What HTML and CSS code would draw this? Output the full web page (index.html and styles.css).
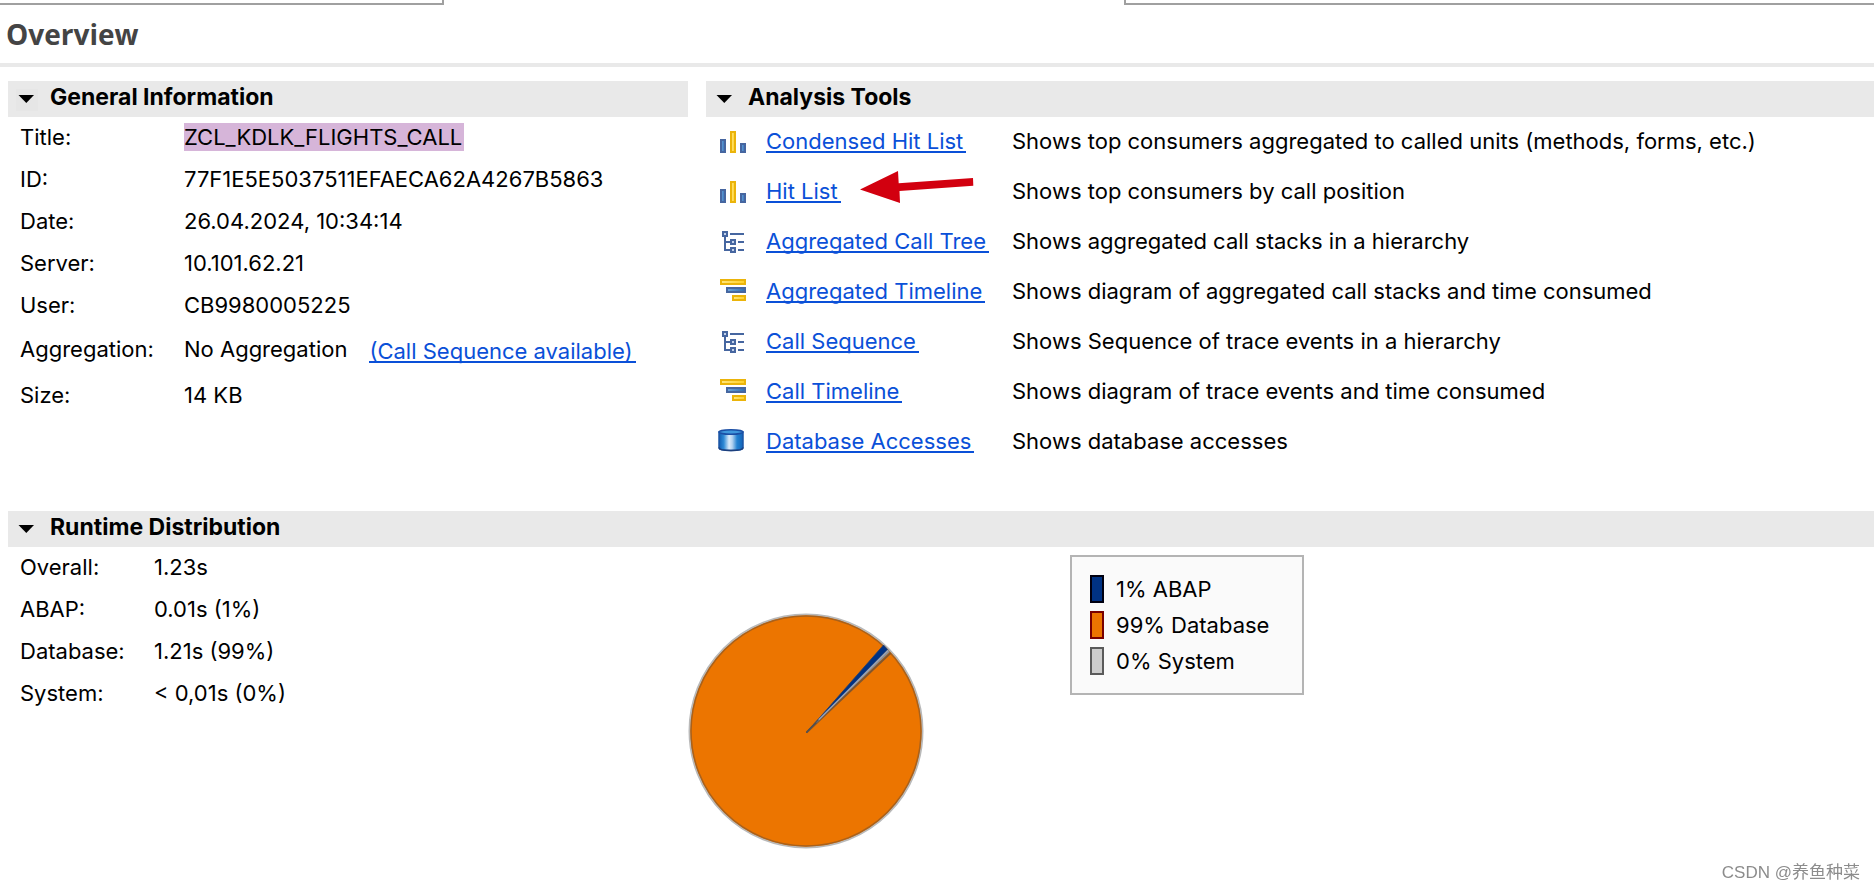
FILE: index.html
```html
<!DOCTYPE html>
<html lang="en">
<head>
<meta charset="utf-8">
<title>Overview</title>
<link rel="stylesheet" href="styles.css">
</head>
<body>
<svg class="defs" aria-hidden="true">
  <defs>
    <linearGradient id="blue" x1="0" y1="0" x2="1" y2="0"><stop offset="0" stop-color="#6fa6dc"/><stop offset="1" stop-color="#2f6db5"/></linearGradient>
    <linearGradient id="yellow" x1="0" y1="0" x2="1" y2="0"><stop offset="0" stop-color="#ffe680"/><stop offset="1" stop-color="#ffd028"/></linearGradient>
    <linearGradient id="drum" x1="0" y1="0" x2="1" y2="0"><stop offset="0" stop-color="#0f5bb0"/><stop offset=".2" stop-color="#2f8ad6"/><stop offset=".42" stop-color="#dcebfa"/><stop offset=".55" stop-color="#b4d3f0"/><stop offset=".75" stop-color="#2583d2"/><stop offset="1" stop-color="#1263b8"/></linearGradient>
    <symbol id="bars" viewBox="0 0 32 26">
      <g stroke-width="2"><path d="M5 12h4v12H5z" fill="url(#blue)" stroke="#4666a0"/><path d="M15 4h4v20h-4z" fill="url(#yellow)" stroke="#ebb40a"/><path d="M25 16h4v8h-4z" fill="url(#blue)" stroke="#4666a0"/></g>
    </symbol>
    <symbol id="tree" viewBox="0 0 32 26">
      <g fill="#c3d2ea" stroke="#4666a0" stroke-width="2"><path d="M14 6h14M9 9v13h6M9 14h6M22 14h6M22 22h6" fill="none"/><path d="M7 4h4v4H7zM15 12h4v4h-4zM15 20h4v4h-4z"/></g>
    </symbol>
    <symbol id="timeline" viewBox="0 0 32 26">
      <g stroke-width="2"><path d="M5 2h24v4H5z" fill="url(#yellow)" stroke="#ebb40a"/><path d="M11 10h18v4H11z" fill="url(#blue)" stroke="#4666a0"/><path d="M17 18h12v4H17z" fill="url(#yellow)" stroke="#ebb40a"/></g>
    </symbol>
    <symbol id="database" viewBox="0 0 32 26">
      <path d="M3 4v16c0 1.500 5 2.500 12 2.500s12-1 12-2.500V4z" fill="url(#drum)" stroke="#1c55a5" stroke-width="1.500"/>
      <path d="M3 19.500c0 2 5 3 12 3s12-1 12-3" fill="none" stroke="#1d3f7c" stroke-width="1.500"/>
      <ellipse cx="15" cy="4" rx="12" ry="2.300" fill="#3f97dc" stroke="#1c4fa5" stroke-width="1.600"/>
    </symbol>
  </defs>
</svg>

<div class="tabs"><div class="tab tab-left"></div><div></div><div class="tab tab-right"></div></div>
<header class="page-head"><h1>Overview</h1></header>

<main>
  <div class="columns">
    <section>
      <h2 class="bar"><button type="button" class="focused"><svg class="twisty" viewBox="0 0 22 22" aria-hidden="true"><path d="M2.500 6h15.500l-7.700 8z"/></svg>General Information</button></h2>
      <dl class="info">
        <div class="row"><dt>Title:</dt><dd><mark>ZCL_KDLK_FLIGHTS_CALL</mark></dd></div>
        <div class="row"><dt>ID:</dt><dd>77F1E5E5037511EFAECA62A4267B5863</dd></div>
        <div class="row"><dt>Date:</dt><dd>26.04.2024, 10:34:14</dd></div>
        <div class="row"><dt>Server:</dt><dd>10.101.62.21</dd></div>
        <div class="row"><dt>User:</dt><dd>CB9980005225</dd></div>
        <div class="row row-link"><dt>Aggregation:</dt><dd>No Aggregation <a class="link" href="#">(Call Sequence available)</a></dd></div>
        <div class="row"><dt>Size:</dt><dd>14 KB</dd></div>
      </dl>
    </section>

    <section>
      <h2 class="bar"><button type="button"><svg class="twisty" viewBox="0 0 22 22" aria-hidden="true"><path d="M2.500 6h15.500l-7.700 8z"/></svg>Analysis Tools</button></h2>
      <ul class="tools">
        <li><svg class="icon" aria-hidden="true"><use href="#bars"/></svg><div class="cell"><a class="link" href="#">Condensed Hit List</a></div><span>Shows top consumers aggregated to called units (methods, forms, etc.)</span></li>
        <li><svg class="icon" aria-hidden="true"><use href="#bars"/></svg><div class="cell"><a class="link" href="#">Hit List</a><svg class="arrow" viewBox="0 0 114 34" aria-hidden="true"><path d="M0 18.500L38 0l.7 12.300L113 7l.3 7.700L39.500 20l.5 12z"/></svg></div><span>Shows top consumers by call position</span></li>
        <li><svg class="icon" aria-hidden="true"><use href="#tree"/></svg><div class="cell"><a class="link" href="#">Aggregated Call Tree</a></div><span>Shows aggregated call stacks in a hierarchy</span></li>
        <li><svg class="icon" aria-hidden="true"><use href="#timeline"/></svg><div class="cell"><a class="link" href="#">Aggregated Timeline</a></div><span>Shows diagram of aggregated call stacks and time consumed</span></li>
        <li><svg class="icon" aria-hidden="true"><use href="#tree"/></svg><div class="cell"><a class="link" href="#">Call Sequence</a></div><span>Shows Sequence of trace events in a hierarchy</span></li>
        <li><svg class="icon" aria-hidden="true"><use href="#timeline"/></svg><div class="cell"><a class="link" href="#">Call Timeline</a></div><span>Shows diagram of trace events and time consumed</span></li>
        <li><svg class="icon" aria-hidden="true"><use href="#database"/></svg><div class="cell"><a class="link" href="#">Database Accesses</a></div><span>Shows database accesses</span></li>
      </ul>
    </section>
  </div>

  <section class="runtime">
    <h2 class="bar"><button type="button"><svg class="twisty" viewBox="0 0 22 22" aria-hidden="true"><path d="M2.500 6h15.500l-7.700 8z"/></svg>Runtime Distribution</button></h2>
    <div class="runtime-body">
      <dl class="info times">
        <div class="row"><dt>Overall:</dt><dd>1.23s</dd></div>
        <div class="row"><dt>ABAP:</dt><dd>0.01s (1%)</dd></div>
        <div class="row"><dt>Database:</dt><dd>1.21s (99%)</dd></div>
        <div class="row"><dt>System:</dt><dd>&lt; 0,01s (0%)</dd></div>
      </dl>
      <svg class="pie" viewBox="0 0 236 236" role="img" aria-label="Runtime distribution pie chart">
        <circle cx="118" cy="118" r="116.500" fill="#ec7500" stroke="#b9b9b9" stroke-width="2"/>
        <circle cx="118" cy="118" r="115" fill="none" stroke="#a8611c" stroke-width="1.500"/>
        <path d="M118.500 119.500L202 39l-2-2.500-2.500-3z" fill="#8c8c8c"/>
        <path d="M118.500 119.500L202.500 40" stroke="#80562f" stroke-width="2"/>
        <path d="M118.500 119.500L195.500 32l4 4.500z" fill="#003283" stroke="#2a3f68" stroke-width=".8"/>
        <path d="M128 109.500L200 37.500" stroke="#9aa3b5" stroke-width="1.500"/>
        <path d="M118.500 119.500l12-13" stroke="#55514e" stroke-width="1.500"/>
      </svg>
      <ul class="legend">
        <li><span class="swatch abap"></span>1% ABAP</li>
        <li><span class="swatch db"></span>99% Database</li>
        <li><span class="swatch sys"></span>0% System</li>
      </ul>
    </div>
  </section>
</main>
<div class="watermark">CSDN @养鱼种菜</div>
</body>
</html>
```
FILE: styles.css
```css
* { box-sizing: border-box; }
body {
  margin: 0;
  background: #fff;
  color: #000;
  font: 22px/26px Inter, "Liberation Sans", sans-serif;
}
h1, h2, dl, dd, ul { margin: 0; padding: 0; }
ul { list-style: none; }
.defs { position: absolute; width: 0; height: 0; }

.tabs { display: grid; grid-template-columns: 444fr 680fr 750fr; height: 5px; }
.tab { border-bottom: 2px solid #a0a0a0; }
.tab-left { border-right: 2px solid #a0a0a0; }
.tab-right { border-left: 2px solid #a0a0a0; }

.page-head { padding: 9px 6px; border-bottom: 4px solid #e9e9e9; }
h1 { color: #444; font: 700 28px/40px "Open Sans", "Noto Sans", sans-serif; }

main { padding: 14px 0 0 8px; }
.columns { display: grid; grid-template-columns: 680fr 1168fr; column-gap: 18px; }
.bar { background: #e9e9e9; font-size: 23px; line-height: 26px; }
.bar button {
  display: flex;
  gap: 12px;
  width: 100%;
  padding: 3px 8px 7px;
  border: 0;
  background: none;
  color: inherit;
  font: inherit;
  font-weight: 700;
  text-align: left;
}
.twisty { width: 22px; height: 22px; margin: 5px 0 -1px; }
.focused .twisty { background: #e6e6e6; }

.info { display: grid; gap: 16px; padding: 7px 12px 0; }
.row { display: grid; grid-template-columns: 164px 1fr; }
.row dd { display: flex; align-items: flex-start; gap: 22px; }
.row-link { padding: 2px 0 3px; }
.row-link .link { margin-top: 5px; }
.times .row { grid-template-columns: 134px 1fr; }
mark { margin: -1px 0; line-height: 28px; padding-right: 2px; background: #d6b5d9; color: inherit; }

.link {
  display: block;
  padding-right: 3px;
  border-bottom: 2px solid #0a50d8;
  color: #0a50d8;
  line-height: 20px;
  text-decoration: none;
}
.tools li {
  display: grid;
  grid-template-columns: 32px 228px 1fr;
  column-gap: 18px;
  align-items: baseline;
  padding: 11px 0 13px 10px;
}
.icon { align-self: start; width: 32px; height: 26px; }
.cell { position: relative; display: flex; }
.arrow { position: absolute; top: -10px; left: 94px; width: 114px; height: 34px; fill: #d2000f; }

.runtime { margin-top: 44px; }
.runtime-body { display: grid; grid-template-columns: 680fr 382fr 804fr; align-items: start; }
.pie { width: 236px; height: 236px; margin-top: 66px; }
.legend {
  display: grid;
  gap: 8px;
  width: 234px;
  margin-top: 8px;
  padding: 18px;
  border: 2px solid #b4b4b4;
  background: #fafafa;
}
.legend li { display: flex; align-items: center; gap: 12px; height: 28px; }
.swatch { width: 14px; height: 28px; border: 2px solid; }
.abap { background: #003283; border-color: #000010; }
.db { background: #ec7500; border-color: #780000; }
.sys { background: #ccc; border-color: #5a5a5a; }

.watermark {
  position: fixed;
  right: 14px;
  bottom: 6px;
  color: #8c8c8c;
  font: 17px/26px "Liberation Sans", "Noto Sans CJK SC", sans-serif;
}
```
